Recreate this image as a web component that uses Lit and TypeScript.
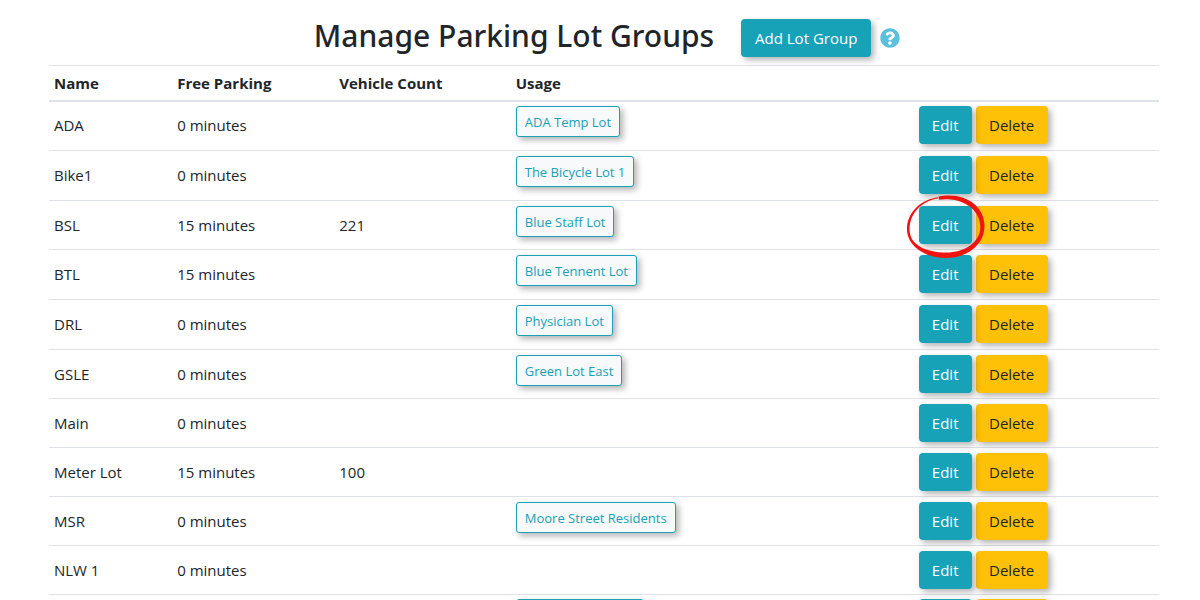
import { LitElement, html, css, nothing } from "lit";
import { customElement, property } from "lit/decorators.js";

interface LotGroup {
  name: string;
  free: number;
  count?: number;
  lot?: string;
  marked?: boolean;
}

const groups: LotGroup[] = [
  { name: "ADA", free: 0, lot: "ADA Temp Lot" },
  { name: "Bike1", free: 0, lot: "The Bicycle Lot 1" },
  { name: "BSL", free: 15, count: 221, lot: "Blue Staff Lot", marked: true },
  { name: "BTL", free: 15, lot: "Blue Tennent Lot" },
  { name: "DRL", free: 0, lot: "Physician Lot" },
  { name: "GSLE", free: 0, lot: "Green Lot East" },
  { name: "Main", free: 0 },
  { name: "Meter Lot", free: 15, count: 100 },
  { name: "MSR", free: 0, lot: "Moore Street Residents" },
  { name: "NLW 1", free: 0 },
  { name: "NLW 2", free: 0, lot: "North Lot West 12" },
];

@customElement("lot-group-table")
export class LotGroupTable extends LitElement {
  @property({ attribute: false }) groups: LotGroup[] = [];

  static styles = css`
    :host {
      display: block;
    }
    table {
      width: 100%;
      table-layout: fixed;
      border-collapse: separate;
      border-spacing: 0;
    }
    .name {
      width: 11.1%;
    }
    .free {
      width: 14.6%;
    }
    .count {
      width: 15.9%;
    }
    .usage {
      width: 36.3%;
    }
    th,
    td {
      box-sizing: border-box;
      padding: 5px;
      border-top: 1px solid #dee2e6;
      text-align: left;
      vertical-align: top;
    }
    th {
      border-bottom: 2px solid #dee2e6;
      line-height: 24px;
      font-weight: 700;
    }
    td {
      height: 50px;
      line-height: 38px;
    }
    tr:nth-child(3n) td,
    .bare td {
      height: 49px;
    }
    tbody tr:first-child td,
    tbody tr:last-child td {
      padding-top: 4px;
    }
    tbody tr:first-child td {
      height: 48px;
      border-top: 0;
    }
    .used td {
      padding-bottom: 4px;
    }
    .actions {
      display: flex;
      gap: 4px;
    }
    .target {
      position: relative;
      display: flex;
    }
    .ring {
      position: absolute;
      left: -14px;
      top: -12px;
      z-index: 1;
      width: 82px;
      height: 66px;
      pointer-events: none;
    }
    button {
      box-sizing: border-box;
      margin: 0;
      font: inherit;
      border: 0;
      border-radius: 4px;
      cursor: pointer;
      white-space: nowrap;
      box-shadow: 3px 3px 6px rgba(0, 0, 0, 0.3);
    }
    .edit,
    .delete {
      height: 38px;
      padding: 0;
      line-height: 24px;
    }
    .edit {
      width: 53px;
      color: #fff;
      background: #17a2b8;
    }
    .delete {
      width: 72px;
      color: #212529;
      background: #ffc107;
    }
    .lot {
      display: block;
      height: 31px;
      padding: 0 8px;
      border: 1px solid #17a2b8;
      border-radius: 3px;
      color: #17a2b8;
      background: #f8f9fa;
      font-size: 13px;
      line-height: 20px;
    }
  `;

  render() {
    return html`
      <table>
        <thead>
          <tr>
            <th class="name" scope="col">Name</th>
            <th class="free" scope="col">Free Parking</th>
            <th class="count" scope="col">Vehicle Count</th>
            <th class="usage" scope="col">Usage</th>
            <th></th>
          </tr>
        </thead>
        <tbody>
          ${this.groups.map(
            (g) => html`
              <tr class=${g.lot ? "used" : "bare"}>
                <td>${g.name}</td>
                <td>${g.free} minutes</td>
                <td>${g.count ?? nothing}</td>
                <td>
                  ${g.lot ? html`<button class="lot" type="button">${g.lot}</button>` : nothing}
                </td>
                <td>
                  <div class="actions">
                    <span class="target">
                      <button class="edit" type="button">Edit</button>
                      ${g.marked
                        ? html`<svg class="ring" viewBox="0 0 82 66" aria-hidden="true">
                            <path
                              fill="#f01410"
                              fill-rule="evenodd"
                              d="M33 3.200C18 5 2 17 2 35C2 52 20 64 41 64C63 64 79.500 50 79.500 32C79.500 14 64 1.500 44 1.500C40 1.500 37 1.800 33.500 2.600L34 5.800C38 5.200 41 5 45 5.400C61 6.500 75.300 17 75.300 33C75.300 48 60 58.500 41 58.500C21 58.500 4.600 51 4.600 35.500C4.600 19 17 7 33 4.600Z"
                            />
                          </svg>`
                        : nothing}
                    </span>
                    <button class="delete" type="button">Delete</button>
                  </div>
                </td>
              </tr>
            `
          )}
        </tbody>
      </table>
    `;
  }
}

@customElement("app-root")
export class AppRoot extends LitElement {
  static styles = css`
    :host {
      display: block;
      background: #fff;
      color: #212529;
      font-family: "Segoe UI", "Open Sans", "Noto Sans", sans-serif;
      font-size: 15px;
      line-height: 24px;
    }
    main {
      padding: 14px 41px 0 49px;
    }
    header {
      display: flex;
      justify-content: center;
      align-items: center;
      padding: 0 0 8px 6px;
    }
    h1 {
      margin: 0 27px 0 0;
      font-family: "Segoe UI", "Noto Sans", "Open Sans", sans-serif;
      font-size: 30px;
      line-height: 43px;
      font-weight: 500;
    }
    .add {
      box-sizing: border-box;
      align-self: flex-end;
      width: 130px;
      height: 38px;
      margin: 0 9px 0 0;
      padding: 0;
      border: 0;
      border-radius: 4px;
      color: #fff;
      background: #17a2b8;
      font: inherit;
      white-space: nowrap;
      cursor: pointer;
      box-shadow: 3px 3px 6px rgba(0, 0, 0, 0.3);
    }
    .help {
      display: flex;
      align-self: flex-end;
      padding-bottom: 9px;
    }
    .help svg {
      width: 20px;
      height: 20px;
    }
  `;

  render() {
    return html`
      <main>
        <header>
          <h1>Manage Parking Lot Groups</h1>
          <button class="add" type="button">Add Lot Group</button>
          <a class="help" href="#help" aria-label="Help">
            <svg viewBox="0 0 512 512" aria-hidden="true">
              <path
                fill="#5bc0de"
                d="M504 256c0 136.997-111.043 248-248 248S8 392.997 8 256C8 119.083 119.043 8 256 8s248 111.083 248 248zM262.655 90c-54.497 0-89.255 22.957-116.549 63.758-3.536 5.286-2.353 12.415 2.715 16.258l34.699 26.310c5.205 3.947 12.621 3.008 16.665-2.122 17.864-22.658 30.113-35.797 57.303-35.797 20.429 0 45.698 13.148 45.698 32.958 0 14.976-12.363 22.667-32.534 33.976C247.128 238.528 216 254.941 216 296v4c0 6.627 5.373 12 12 12h56c6.627 0 12-5.373 12-12v-1.333c0-28.462 83.186-29.647 83.186-106.667 0-58.002-60.165-102-116.531-102zM256 338c-25.365 0-46 20.635-46 46 0 25.364 20.635 46 46 46s46-20.636 46-46c0-25.365-20.635-46-46-46z"
              />
            </svg>
          </a>
        </header>
        <lot-group-table .groups=${groups}></lot-group-table>
      </main>
    `;
  }
}
